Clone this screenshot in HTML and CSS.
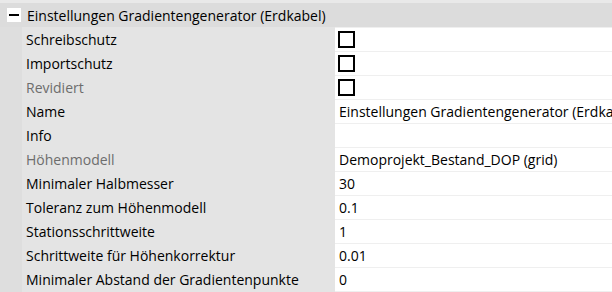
FILE: index.html
```html
<!DOCTYPE html>
<html lang="de">
<head>
<meta charset="utf-8">
<title>Eigenschaften</title>
<link rel="stylesheet" href="styles.css">
</head>
<body>
<div class="grid">
  <div class="cat">
    <span class="toggle"></span>
    <span class="cat-title">Einstellungen Gradientengenerator (Erdkabel)</span>
  </div>
  <div class="row"><div class="gutter"></div><div class="label">Schreibschutz</div><div class="value"><span class="check"></span></div></div>
  <div class="row"><div class="gutter"></div><div class="label">Importschutz</div><div class="value"><span class="check"></span></div></div>
  <div class="row"><div class="gutter"></div><div class="label disabled">Revidiert</div><div class="value"><span class="check"></span></div></div>
  <div class="row"><div class="gutter"></div><div class="label">Name</div><div class="value">Einstellungen Gradientengenerator (Erdkabel)</div></div>
  <div class="row"><div class="gutter"></div><div class="label">Info</div><div class="value"></div></div>
  <div class="row"><div class="gutter"></div><div class="label disabled">Höhenmodell</div><div class="value">Demoprojekt_Bestand_DOP (grid)</div></div>
  <div class="row"><div class="gutter"></div><div class="label">Minimaler Halbmesser</div><div class="value">30</div></div>
  <div class="row"><div class="gutter"></div><div class="label">Toleranz zum Höhenmodell</div><div class="value">0.1</div></div>
  <div class="row"><div class="gutter"></div><div class="label">Stationsschrittweite</div><div class="value">1</div></div>
  <div class="row"><div class="gutter"></div><div class="label">Schrittweite für Höhenkorrektur</div><div class="value">0.01</div></div>
  <div class="row last"><div class="gutter"></div><div class="label">Minimaler Abstand der Gradientenpunkte</div><div class="value">0</div></div>
</div>
</body>
</html>
```
FILE: styles.css
```css
html, body {
  margin: 0;
  padding: 0;
  background: #ffffff;
}
body {
  width: 612px;
  height: 292px;
  overflow: hidden;
  font-family: "Open Sans", "Noto Sans", "Liberation Sans", sans-serif;
  font-size: 14px;
  color: #000000;
}
.grid {
  display: flex;
  flex-direction: column;
}
.cat {
  height: 24px;
  border-top: 3px solid #e9e9e9;
  background: #dcdcdc;
  display: flex;
  align-items: center;
  white-space: nowrap;
}
.toggle {
  position: relative;
  width: 14px;
  height: 14px;
  margin-left: 7px;
  background: #ffffff;
  flex: none;
}
.toggle::after {
  content: "";
  position: absolute;
  left: 2px;
  right: 2px;
  top: 6px;
  height: 2px;
  background: #000000;
}
.cat-title {
  margin-left: 6px;
}
.row {
  display: grid;
  grid-template-columns: 22px 313px 1fr;
  height: 24px;
}
.row.last {
  height: 25px;
}
.gutter {
  background: #dedede;
}
.label {
  background: #e4e4e4;
  padding-left: 4px;
  display: flex;
  align-items: center;
  white-space: nowrap;
  overflow: hidden;
}
.label.disabled {
  color: #6d6d6d;
}
.value {
  background: #ffffff;
  border-top: 1px solid #efefef;
  padding-left: 4px;
  display: flex;
  align-items: center;
  white-space: nowrap;
  overflow: hidden;
}
.row.last .value {
  border-bottom: 1px solid #efefef;
}
.check {
  width: 17px;
  height: 17px;
  box-sizing: border-box;
  border: 2px solid #000000;
  margin-left: -1px;
  flex: none;
}
```
